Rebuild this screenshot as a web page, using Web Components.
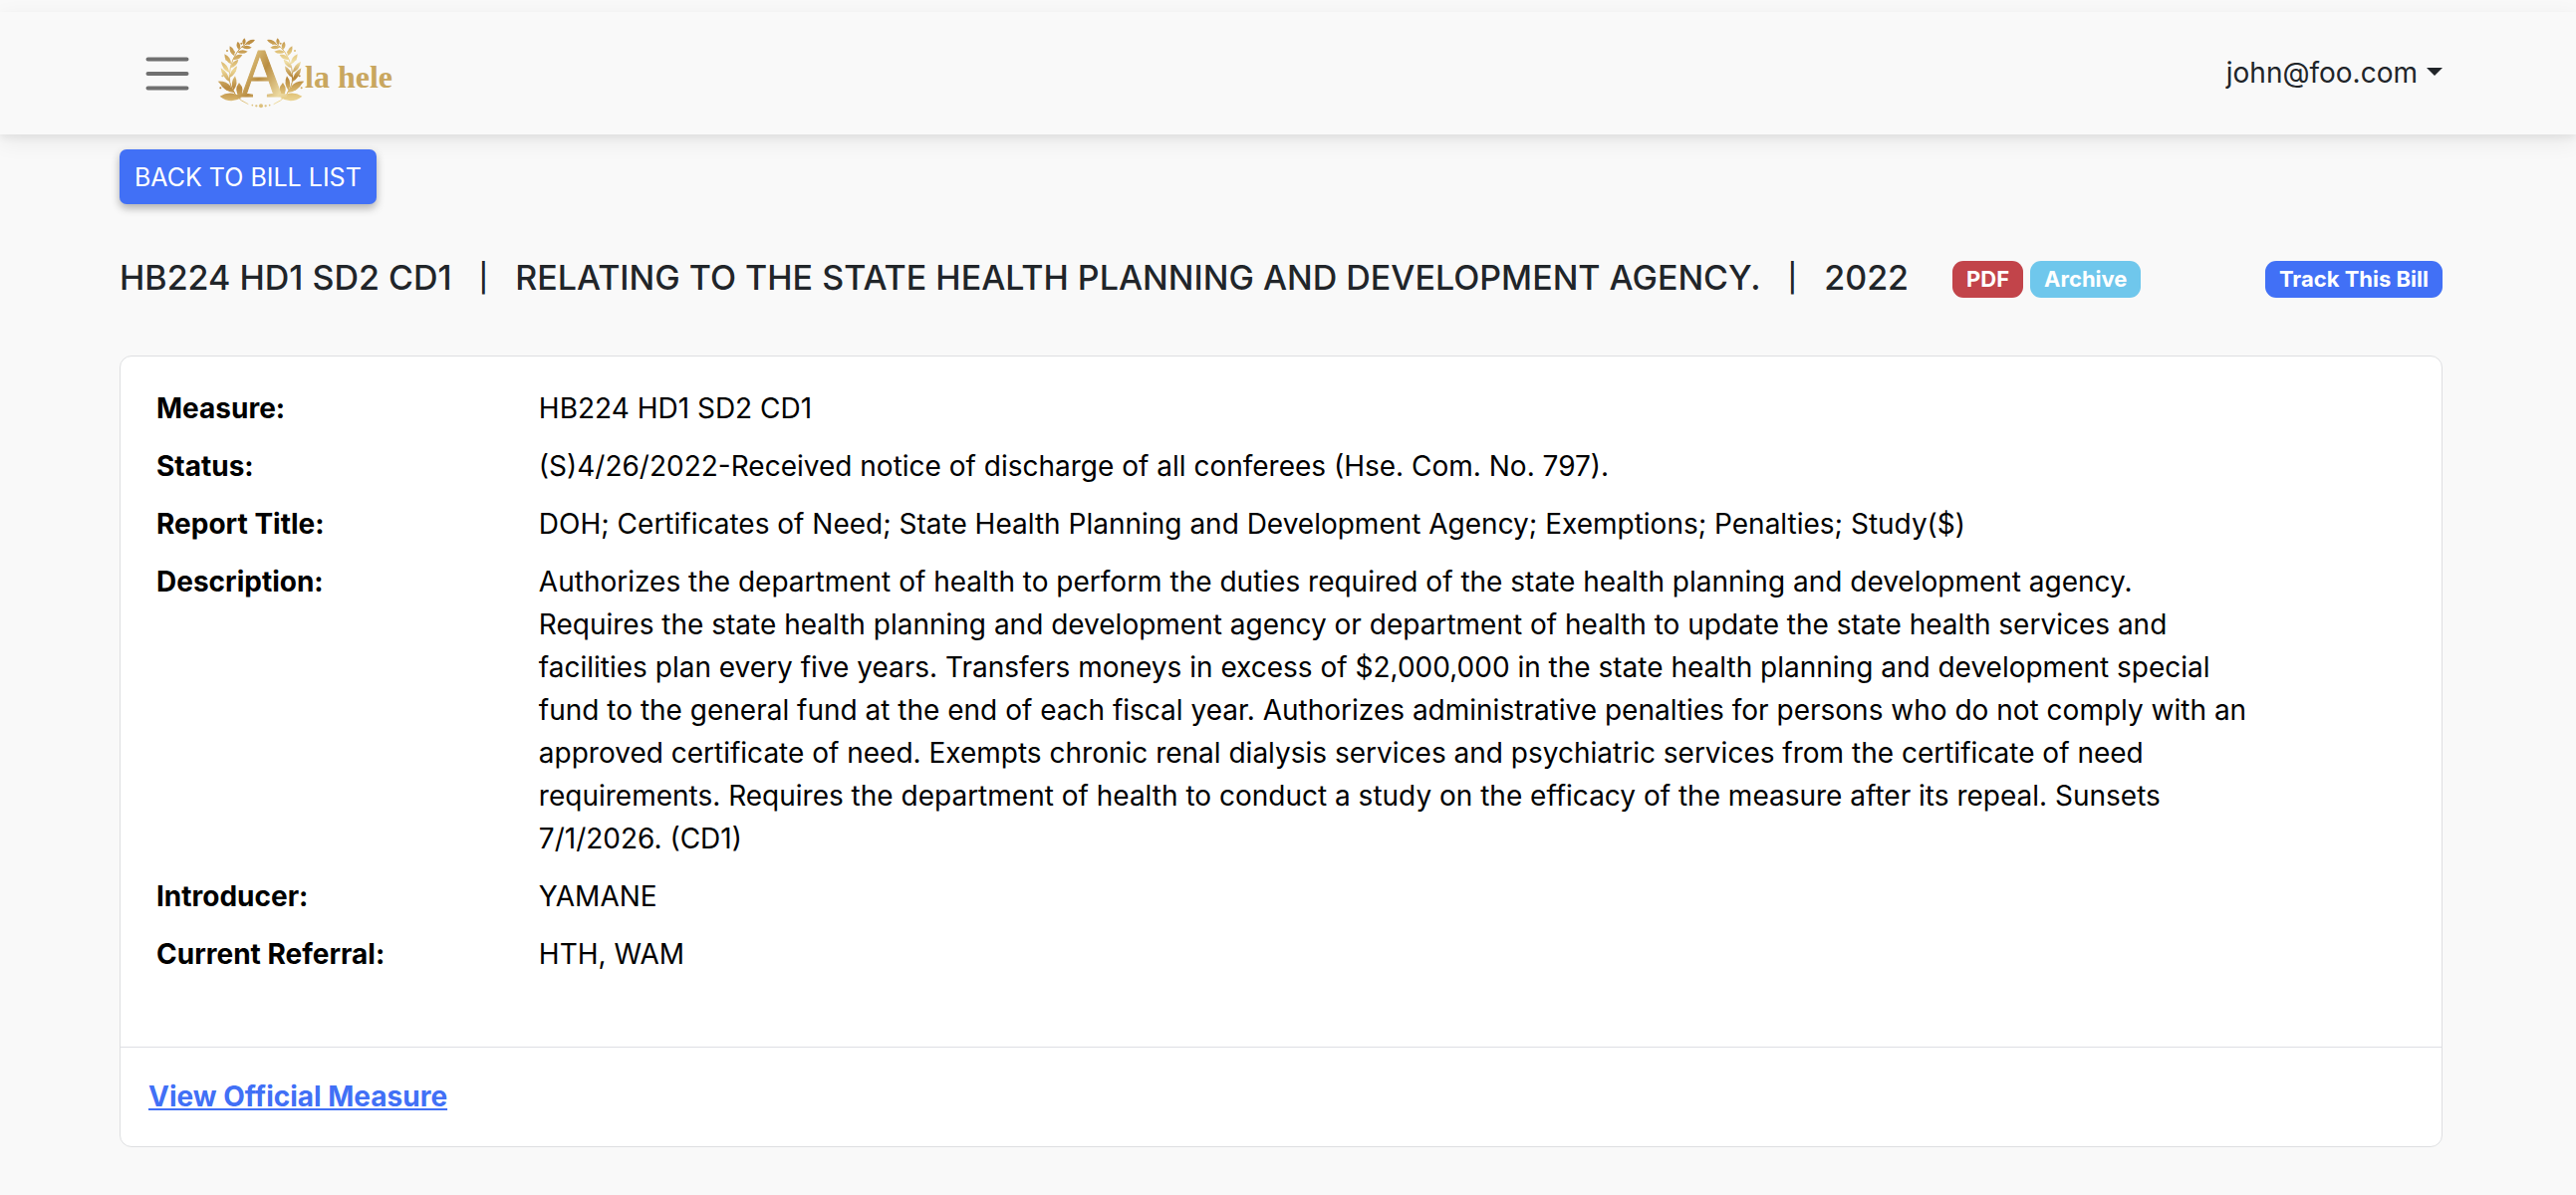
<!DOCTYPE html>
<html lang="en">
<head>
<meta charset="utf-8">
<title>Bill details</title>
<style>
  html { background: #f9f9f9; }
  body {
    margin: 0;
    font-family: Inter, "Liberation Sans", sans-serif;
    font-size: 28px;
    line-height: 43px;
    color: #212529;
    --gutter-left: 120px;
    --gutter-right: 134px;
    --blue: #4170f6;
  }
</style>
</head>
<body>
<bill-page></bill-page>

<template id="t-logo">
  <style>
    :host { display: block; }
    a { display: block; text-decoration: none; }
    svg { display: block; width: 190px; height: 90px; }
    .word { font: bold 32px "Liberation Serif", serif; fill: #c9a75f; }
    .mono { font: 70px "Liberation Serif", serif; stroke-width: 1px; }
  </style>
  <a href="#" aria-label="A la hele">
    <svg viewBox="0 0 190 90">
      <defs>
        <linearGradient id="ga" x1="0" y1="0" x2="1" y2="1">
          <stop offset="0" stop-color="#c59a4e"/><stop offset=".3" stop-color="#d9ba74"/>
          <stop offset=".5" stop-color="#b98d42"/><stop offset=".8" stop-color="#ecd9a0"/>
          <stop offset="1" stop-color="#e0c583"/>
        </linearGradient>
        <linearGradient id="gl" gradientUnits="userSpaceOnUse" x1="70" y1="20" x2="70" y2="230">
          <stop offset="0" stop-color="#b58438"/><stop offset=".3" stop-color="#cfa75c"/>
          <stop offset=".5" stop-color="#ecd592"/><stop offset=".75" stop-color="#b98a40"/>
          <stop offset=".9" stop-color="#d2ac62"/><stop offset="1" stop-color="#ecd9a0"/>
        </linearGradient>
        <linearGradient id="gr" gradientUnits="userSpaceOnUse" x1="70" y1="20" x2="70" y2="230">
          <stop offset="0" stop-color="#b58438"/><stop offset=".25" stop-color="#e3c67d"/>
          <stop offset=".38" stop-color="#f0dfa6"/><stop offset=".6" stop-color="#b58438"/>
          <stop offset=".85" stop-color="#e3c67d"/><stop offset="1" stop-color="#f0dfa6"/>
        </linearGradient>
      </defs>
      <g id="wreath" transform="scale(.33333)"></g>
      <text class="mono" x="53" y="68" text-anchor="middle" fill="url(#ga)" stroke="url(#ga)">A</text>
      <text class="word" x="96" y="59">la hele</text>
    </svg>
  </a>
</template>

<template id="t-header">
  <style>
    :host {
      display: block; margin-top: 12px; background: #f9f9f9;
      box-shadow: 0 7px 22px rgba(0,0,0,.07), 0 4px 7px rgba(0,0,0,.05);
    }
    nav {
      display: flex; align-items: center; height: 123px;
      padding: 0 var(--gutter-right) 0 var(--gutter-left);
    }
    button { font: inherit; color: inherit; background: none; border: 0; padding: 0; cursor: pointer; }
    .menu { display: flex; margin-left: 26px; }
    .menu svg { display: block; width: 44px; height: 36px; }
    bill-logo { margin-left: 20px; }
    .user { margin-left: auto; display: flex; align-items: center; gap: 9px; }
    .caret { border: 8px solid transparent; border-top-color: currentColor; border-bottom: 0; margin-bottom: 4px; }
  </style>
  <nav>
    <button class="menu" aria-label="Open menu">
      <svg viewBox="0 0 44 36" fill="none" stroke="#707070" stroke-width="4" stroke-linecap="round"><path d="M2.5 3.5h39M2.5 18h39M2.5 32.500h39"/></svg>
    </button>
    <bill-logo></bill-logo>
    <button class="user" aria-haspopup="true"><slot></slot><span class="caret"></span></button>
  </nav>
</template>

<template id="t-badge">
  <style>
    :host { display: block; --tone: var(--blue); }
    :host([tone="danger"]) { --tone: #c2444a; }
    :host([tone="info"]) { --tone: #6fc7ec; }
    button {
      display: block; border: 0; border-radius: 11px; background: var(--tone); color: #fff;
      font: bold 22px/23px Inter, "Liberation Sans", sans-serif; padding: 7px 14px; cursor: pointer;
    }
  </style>
  <button><slot></slot></button>
</template>

<template id="t-row">
  <style>
    :host { display: grid; grid-template-columns: 17% 76.2%; }
    .label { font-weight: bold; }
  </style>
  <div class="label" role="term"><slot name="label"></slot></div>
  <div role="definition"><slot></slot></div>
</template>

<template id="t-card">
  <style>
    :host {
      display: block; background: #fff; color: #000;
      border: 1px solid #dedfe1; border-radius: 12px;
    }
    .body { display: flex; flex-direction: column; gap: 15px; padding: 31px 36px 71px; }
    .foot { border-top: 1px solid #dedfe4; padding: 28px; }
  </style>
  <div class="body"><slot></slot></div>
  <div class="foot"><slot name="footer"></slot></div>
</template>

<template id="t-page">
  <style>
    :host { display: block; }
    main { padding: 15px var(--gutter-right) 50px var(--gutter-left); }
    .back {
      display: block; border: 0; border-radius: 7px; background: var(--blue); color: #fff;
      font: 25px/31px Inter, "Liberation Sans", sans-serif; text-transform: uppercase;
      padding: 13px 15px 11px; cursor: pointer;
      box-shadow: 0 4px 9px rgba(0,0,0,.3);
    }
    .title { display: flex; align-items: center; margin: 52px 0 56px; }
    h1 { display: flex; gap: 27px; margin: 0 44px 0 0; font-size: 34px; font-weight: 500; line-height: 44px; white-space: nowrap; }
    .bar { font-size: 28px; }
    .badges { display: flex; gap: 7px; }
    .badges, .track { padding-top: 3px; }
    .track { margin-left: auto; }
    a { color: var(--blue); font-weight: bold; text-decoration: underline; }
  </style>
  <bill-header>john@foo.com</bill-header>
  <main>
    <button class="back">Back to Bill List</button>
    <div class="title">
      <h1><span>HB224 HD1 SD2 CD1</span><span class="bar">|</span><span>RELATING TO THE STATE HEALTH PLANNING AND DEVELOPMENT AGENCY.</span><span class="bar">|</span><span>2022</span></h1>
      <div class="badges"><bill-badge tone="danger">PDF</bill-badge><bill-badge tone="info">Archive</bill-badge></div>
      <bill-badge class="track">Track This Bill</bill-badge>
    </div>
    <bill-card>
      <bill-row><span slot="label">Measure:</span>HB224 HD1 SD2 CD1</bill-row>
      <bill-row><span slot="label">Status:</span>(S)4/26/2022-Received notice of discharge of all conferees (Hse. Com. No. 797).</bill-row>
      <bill-row><span slot="label">Report Title:</span>DOH; Certificates of Need; State Health Planning and Development Agency; Exemptions; Penalties; Study($)</bill-row>
      <bill-row><span slot="label">Description:</span>Authorizes the department of health to perform the duties required of the state health planning and development agency. Requires the state health planning and development agency or department of health to update the state health services and facilities plan every five years. Transfers moneys in excess of $2,000,000 in the state health planning and development special fund to the general fund at the end of each fiscal year. Authorizes administrative penalties for persons who do not comply with an approved certificate of need. Exempts chronic renal dialysis services and psychiatric services from the certificate of need requirements. Requires the department of health to conduct a study on the efficacy of the measure after its repeal. Sunsets 7/1/2026. (CD1)</bill-row>
      <bill-row><span slot="label">Introducer:</span>YAMANE</bill-row>
      <bill-row><span slot="label">Current Referral:</span>HTH, WAM</bill-row>
      <a slot="footer" href="#">View Official Measure</a>
    </bill-card>
  </main>
</template>

<script>
  class TemplateElement extends HTMLElement {
    constructor() {
      super();
      this.attachShadow({ mode: "open" })
        .append(document.getElementById(this.constructor.template).content.cloneNode(true));
    }
  }

  // Laurel leaves as [base x, base y, tip x, tip y, width].
  const LEAVES = [
    [98, 207, 32, 203, 23], [92, 206, 90, 162, 19], [78, 193, 30, 160, 17], [73, 186, 78, 142, 14],
    [66, 174, 26, 158, 11], [62, 160, 35, 118, 13], [61, 148, 84, 112, 12], [61, 132, 36, 98, 12],
    [64, 118, 88, 92, 12], [66, 106, 46, 76, 12], [71, 92, 100, 78, 12], [76, 82, 62, 52, 12],
    [84, 70, 116, 68, 11], [90, 63, 86, 38, 11], [98, 55, 128, 56, 11], [104, 49, 106, 28, 10],
    [108, 47, 138, 33, 11]
  ];
  const BERRIES = [[40, 142], [75, 70], [54, 66], [78, 126], [52, 92], [97, 44], [54, 182], [120, 44], [34, 178], [78, 105]];

  function branch(fill) {
    const leaves = LEAVES.map(([x, y, tx, ty, w]) => {
      const dx = tx - x, dy = ty - y, len = Math.hypot(dx, dy);
      const nx = -dy / len * w, ny = dx / len * w;
      const mx = x + dx * .5, my = y + dy * .5;
      return `<path d="M${x} ${y}Q${mx + nx} ${my + ny} ${tx} ${ty}Q${mx - nx} ${my - ny} ${x} ${y}z"/>`;
    }).join("");
    const berries = BERRIES.map(([x, y]) => `<circle cx="${x}" cy="${y}" r="3"/>`).join("");
    return `<g fill="${fill}">${leaves}${berries}
      <path fill="none" stroke="${fill}" stroke-width="3" d="M118 227Q72 208 62 160Q56 112 84 70Q94 54 112 45"/></g>`;
  }

  class BillLogo extends TemplateElement {
    static template = "t-logo";
    constructor() {
      super();
      this.shadowRoot.getElementById("wreath").innerHTML =
        branch("url(#gl)") +
        `<g transform="translate(312 0) scale(-1 1)">${branch("url(#gr)")}</g>` +
        `<g fill="#dcc07c"><circle cx="156" cy="232" r="6"/><circle cx="142" cy="232" r="3.500"/><circle cx="170" cy="232" r="3.500"/><circle cx="130" cy="230" r="2.500"/><circle cx="182" cy="230" r="2.500"/></g>`;
    }
  }
  class BillHeader extends TemplateElement { static template = "t-header"; }
  class BillBadge extends TemplateElement { static template = "t-badge"; }
  class BillRow extends TemplateElement { static template = "t-row"; }
  class BillCard extends TemplateElement { static template = "t-card"; }
  class BillPage extends TemplateElement { static template = "t-page"; }

  customElements.define("bill-logo", BillLogo);
  customElements.define("bill-header", BillHeader);
  customElements.define("bill-badge", BillBadge);
  customElements.define("bill-row", BillRow);
  customElements.define("bill-card", BillCard);
  customElements.define("bill-page", BillPage);
</script>
</body>
</html>
